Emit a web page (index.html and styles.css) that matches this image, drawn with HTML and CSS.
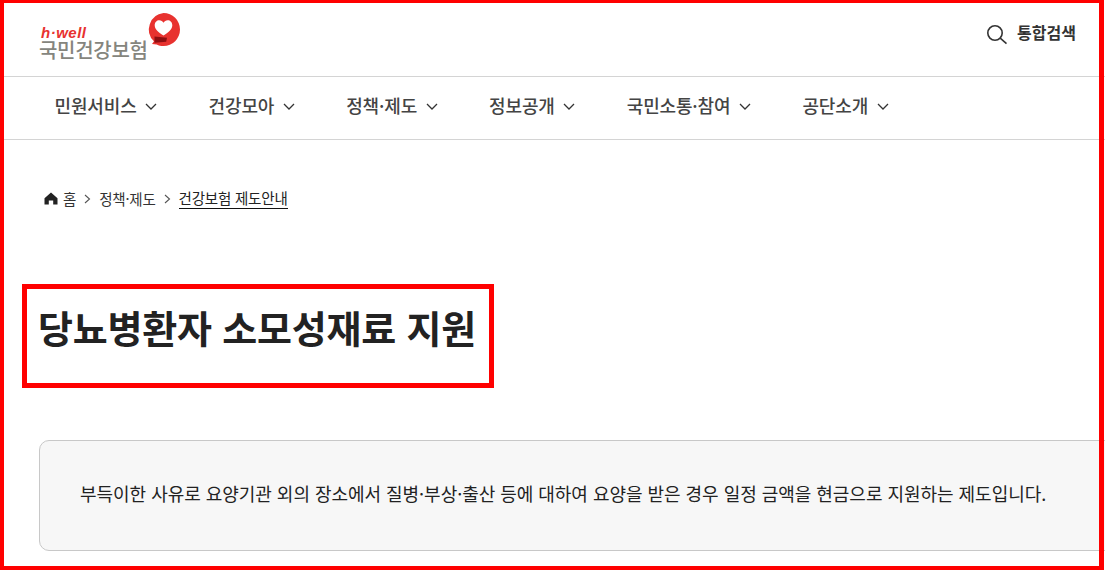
FILE: index.html
```html
<!DOCTYPE html>
<html lang="ko">
<head>
<meta charset="utf-8">
<title>당뇨병환자 소모성재료 지원</title>
<link rel="stylesheet" href="styles.css">
</head>
<body>
<div class="page">
  <header class="top">
    <a class="logo">
      <span class="logo-text">
        <span class="hwell">h·well</span>
        <span class="nhis">국민건강보험</span>
      </span>
      <svg class="logo-mark" width="36" height="36" viewBox="0 0 36 36">
        <path d="M17.500 1a16.500 16.500 0 0 1 0 33c-2.500 0-4.800-.5-6.800-1.500l-4.700-.6 2-2.600A16.500 16.500 0 0 1 17.500 1z" fill="#e8322f"/>
        <path d="M17.500 23.500c-5.500-3.500-8.800-6.600-8.800-10.300 0-3 2.100-5 4.600-5 1.800 0 3.300 1 4.200 2.500.9-1.500 2.400-2.500 4.200-2.500 2.500 0 4.600 2 4.600 5 0 3.700-3.300 6.800-8.800 10.300z" fill="#fff"/>
        <path d="M8.500 24.500l12.500 1.300-.8 4-11.700 1z" fill="#8e0f12"/>
      </svg>
    </a>
    <a class="search">
      <svg class="search-icon" width="20" height="20" viewBox="0 0 20 20" fill="none" stroke="#333" stroke-width="1.600">
        <circle cx="8" cy="8" r="7.200"/>
        <path d="M13.200 13.200L19.500 18.600"/>
      </svg>
      <span>통합검색</span>
    </a>
  </header>
  <nav class="gnb">
    <a class="gnb-item">민원서비스<svg class="chev" viewBox="0 0 12 7"><path d="M1 1l5 5 5-5"/></svg></a>
    <a class="gnb-item">건강모아<svg class="chev" viewBox="0 0 12 7"><path d="M1 1l5 5 5-5"/></svg></a>
    <a class="gnb-item">정책·제도<svg class="chev" viewBox="0 0 12 7"><path d="M1 1l5 5 5-5"/></svg></a>
    <a class="gnb-item">정보공개<svg class="chev" viewBox="0 0 12 7"><path d="M1 1l5 5 5-5"/></svg></a>
    <a class="gnb-item">국민소통·참여<svg class="chev" viewBox="0 0 12 7"><path d="M1 1l5 5 5-5"/></svg></a>
    <a class="gnb-item">공단소개<svg class="chev" viewBox="0 0 12 7"><path d="M1 1l5 5 5-5"/></svg></a>
  </nav>
  <main class="content">
    <ol class="crumbs">
      <li class="crumb-home">
        <svg width="14" height="13" viewBox="0 0 14 13"><path d="M7 .5L.5 6.200V12.500h4.300V8.500h4.400v4h4.300V6.200z" fill="#222"/></svg>
        <span>홈</span>
      </li>
      <li class="sep"><svg width="7" height="10" viewBox="0 0 7 10"><path d="M1 1l4.500 4L1 9" fill="none" stroke="#555" stroke-width="1.100"/></svg></li>
      <li>정책·제도</li>
      <li class="sep"><svg width="7" height="10" viewBox="0 0 7 10"><path d="M1 1l4.500 4L1 9" fill="none" stroke="#555" stroke-width="1.100"/></svg></li>
      <li class="current">건강보험 제도안내</li>
    </ol>
    <div class="title-box">
      <h1>당뇨병환자 소모성재료 지원</h1>
    </div>
    <div class="notice">
      <p>부득이한 사유로 요양기관 외의 장소에서 질병·부상·출산 등에 대하여 요양을 받은 경우 일정 금액을 현금으로 지원하는 제도입니다.</p>
    </div>
  </main>
  <div class="frame"></div>
</div>
</body>
</html>
```
FILE: styles.css
```css
* { box-sizing: border-box; }
html, body { margin: 0; padding: 0; height: 100%; overflow: hidden; background: #fff; }
body { font-family: "Noto Sans CJK KR", "Noto Sans", sans-serif; color: #222; }
.page { position: relative; width: 1105px; height: 570px; overflow: hidden; }
.top { display: flex; justify-content: space-between; align-items: flex-start; height: 77px; padding: 12px 29px 0 39px; border-bottom: 1px solid #d4d4d4; }
.logo { display: flex; align-items: flex-start; }
.logo-text { display: flex; flex-direction: column; padding-top: 13px; }
.hwell { font-family: "Liberation Sans", sans-serif; font-style: italic; font-weight: 700; font-size: 15px; line-height: 15px; color: #e8322f; padding-left: 2px; letter-spacing: .5px; }
.nhis { font-size: 20px; line-height: 20px; color: #85857d; font-weight: 500; letter-spacing: -.3px; }
.logo-mark { margin-left: -2px; margin-top: 0; }
.search { display: flex; align-items: center; gap: 10px; margin-top: 7px; font-size: 16px; font-weight: 700; letter-spacing: 0; color: #333; }
.search-icon { margin-top: 6px; }
.gnb { display: flex; height: 63px; padding: 0 0 7px 54.500px; gap: 51.500px; align-items: center; border-bottom: 1px solid #d4d4d4; }
.gnb-item { display: flex; align-items: center; gap: 8.500px; font-size: 18px; font-weight: 500; letter-spacing: -.15px; color: #444; }
.chev { width: 12px; height: 7px; margin-top: 3px; fill: none; stroke: #333; stroke-width: 1.300; }
.content { padding-left: 39px; }
.crumbs { list-style: none; display: flex; align-items: center; gap: 8px; margin: 0; padding: 48px 0 0 5px; font-size: 14.500px; line-height: 20px; color: #333; letter-spacing: -.2px; }
.crumb-home { display: flex; align-items: center; gap: 5px; }
.sep { display: flex; align-items: center; }
.current { border-bottom: 1px solid #111; color: #222; }
.title-box { width: 472px; height: 104px; margin: 75px 0 52px -17px; padding: 13px 0 0 11px; border: 5px solid #f00; }
h1 { margin: 0; font-size: 38px; line-height: 50px; font-weight: 700; color: #222; letter-spacing: -.2px; white-space: nowrap; }
.notice { width: 1100px; height: 111px; padding: 39px 40px 0; border: 1px solid #c8c8c8; border-radius: 10px; background: #f7f7f7; }
.notice p { margin: 0; font-size: 18px; line-height: 26px; letter-spacing: -.03px; color: #222; white-space: nowrap; }
.frame { position: absolute; left: 0; top: 0; width: 1104px; height: 570px; border-style: solid; border-color: #f00; border-width: 3px 5px 4px 4px; pointer-events: none; }
```
